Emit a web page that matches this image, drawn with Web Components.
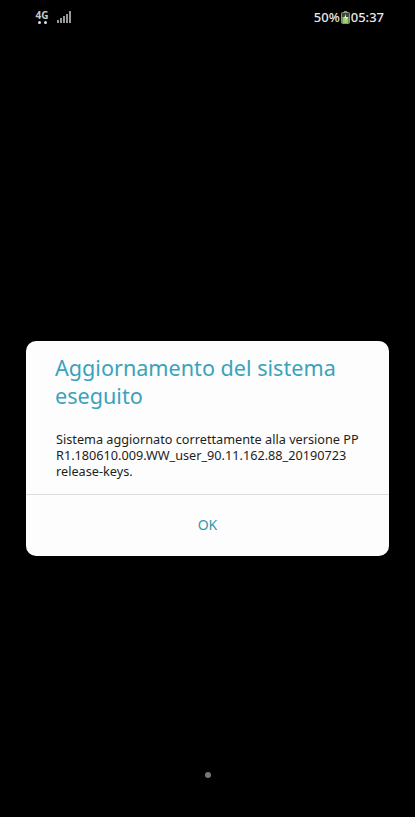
<!DOCTYPE html>
<html>
    <head>
        <style>
            html, body { margin: 0; height: 100%; background: #000; }
            body { font-family: "Noto Sans", "Open Sans", sans-serif; }
            phone-screen { height: 817px; }
        </style>
    </head>
    <body>
        <phone-screen>
            <status-bar slot='status'></status-bar>
            <update-dialog slot='dialog' heading='Aggiornamento del sistema eseguito' action='OK'>
                Sistema aggiornato correttamente alla versione PP R1.180610.009.WW_user_90.11.162.88_20190723 release-keys.
            </update-dialog>
            <home-dot slot='nav'></home-dot>
        </phone-screen>
        <script>
            class PhoneScreen extends HTMLElement {
                constructor() {
                    super();
                    const shadowRoot = this.attachShadow({ mode: 'open' });
                    shadowRoot.innerHTML = `
                        <style>
                            :host { display: grid; grid-template-rows: 341px 215px 1fr; background: #000; color: #fff; }
                            .top { display: block; }
                            .middle { display: block; padding: 0 26px; }
                            .bottom { display: flex; justify-content: center; padding-top: 216px; }
                        </style>
                        <div class='top'><slot name='status'></slot></div>
                        <div class='middle'><slot name='dialog'></slot></div>
                        <div class='bottom'><slot name='nav'></slot></div>
                    `;
                }
            }
            window.customElements.define('phone-screen', PhoneScreen);

            class StatusBar extends HTMLElement {
                constructor() {
                    super();
                    const shadowRoot = this.attachShadow({ mode: 'open' });
                    shadowRoot.innerHTML = `
                        <style>
                            :host { display: flex; justify-content: space-between; align-items: center; height: 34px; padding: 0 31px 0 36px; color: #e8e8e8; font: 500 13px/1 "Noto Sans", sans-serif; }
                            .left, .right { display: flex; align-items: center; }
                            .left { gap: 9px; }
                            .net { display: flex; flex-direction: column; align-items: center; width: 12px; font-size: 10px; font-weight: 700; line-height: 9px; color: #c8c8c8; }
                            .dots { display: flex; gap: 3px; margin-top: 1px; }
                            .dots i { width: 3px; height: 3px; border-radius: 50%; background: #ddd; }
                            svg { display: block; }
                            .battery { margin: 0 1px; }
                        </style>
                        <div class='left'>
                            <div class='net'>4G<div class='dots'><i></i><i></i></div></div>
                            <svg width='14' height='12' viewBox='0 0 14 12' fill='#999'>
                                <rect x='0' y='9' width='2' height='3'/>
                                <rect x='3' y='7' width='2' height='5'/>
                                <rect x='6' y='5' width='2' height='7'/>
                                <rect x='9' y='3' width='2' height='9'/>
                                <rect x='12' y='0' width='2' height='12'/>
                            </svg>
                        </div>
                        <div class='right'>
                            <span>50%</span>
                            <svg class='battery' width='9' height='13' viewBox='0 0 9 13'>
                                <rect x='3' y='0' width='3' height='2' fill='#8a9a80'/>
                                <rect x='.5' y='1.5' width='8' height='11' rx='1' fill='#3d4a36' stroke='#8a9a80'/>
                                <rect x='1.5' y='6' width='6' height='6' fill='#9ccf6a'/>
                                <path d='M5 3 3 7h2l-1 3 3-4H5z' fill='#e6f4d8'/>
                            </svg>
                            <span>05:37</span>
                        </div>
                    `;
                }
            }
            window.customElements.define('status-bar', StatusBar);

            class UpdateDialog extends HTMLElement {
                constructor() {
                    super();
                    const shadowRoot = this.attachShadow({ mode: 'open' });
                    shadowRoot.innerHTML = `
                        <style>
                            :host { display: flex; flex-direction: column; height: 215px; box-sizing: border-box; background: #fdfdfd; border-radius: 10px; overflow: hidden; }
                            .head { padding: 13px 26px 0 29px; color: #3aa3bc; font-size: 21.6px; line-height: 28px; }
                            .text { padding: 21px 26px 0 30px; color: #1e1e1e; font-size: 12.7px; line-height: 16px; }
                            .action { margin-top: auto; height: 62px; box-sizing: border-box; padding-bottom: 2px; border-top: 1px solid #dcdcdc; display: flex; align-items: center; justify-content: center; color: #3a95a8; font-size: 14px; }
                        </style>
                        <div class='head'></div>
                        <div class='text'><slot></slot></div>
                        <div class='action'></div>
                    `;
                    shadowRoot.querySelector('.head').textContent = this.getAttribute('heading');
                    shadowRoot.querySelector('.action').textContent = this.getAttribute('action');
                }
            }
            window.customElements.define('update-dialog', UpdateDialog);

            class HomeDot extends HTMLElement {
                constructor() {
                    super();
                    const shadowRoot = this.attachShadow({ mode: 'open' });
                    shadowRoot.innerHTML = `
                        <style>
                            :host { display: block; width: 6px; height: 6px; border-radius: 50%; background: #777; }
                        </style>
                    `;
                }
            }
            window.customElements.define('home-dot', HomeDot);
        </script>
    </body>
</html>
